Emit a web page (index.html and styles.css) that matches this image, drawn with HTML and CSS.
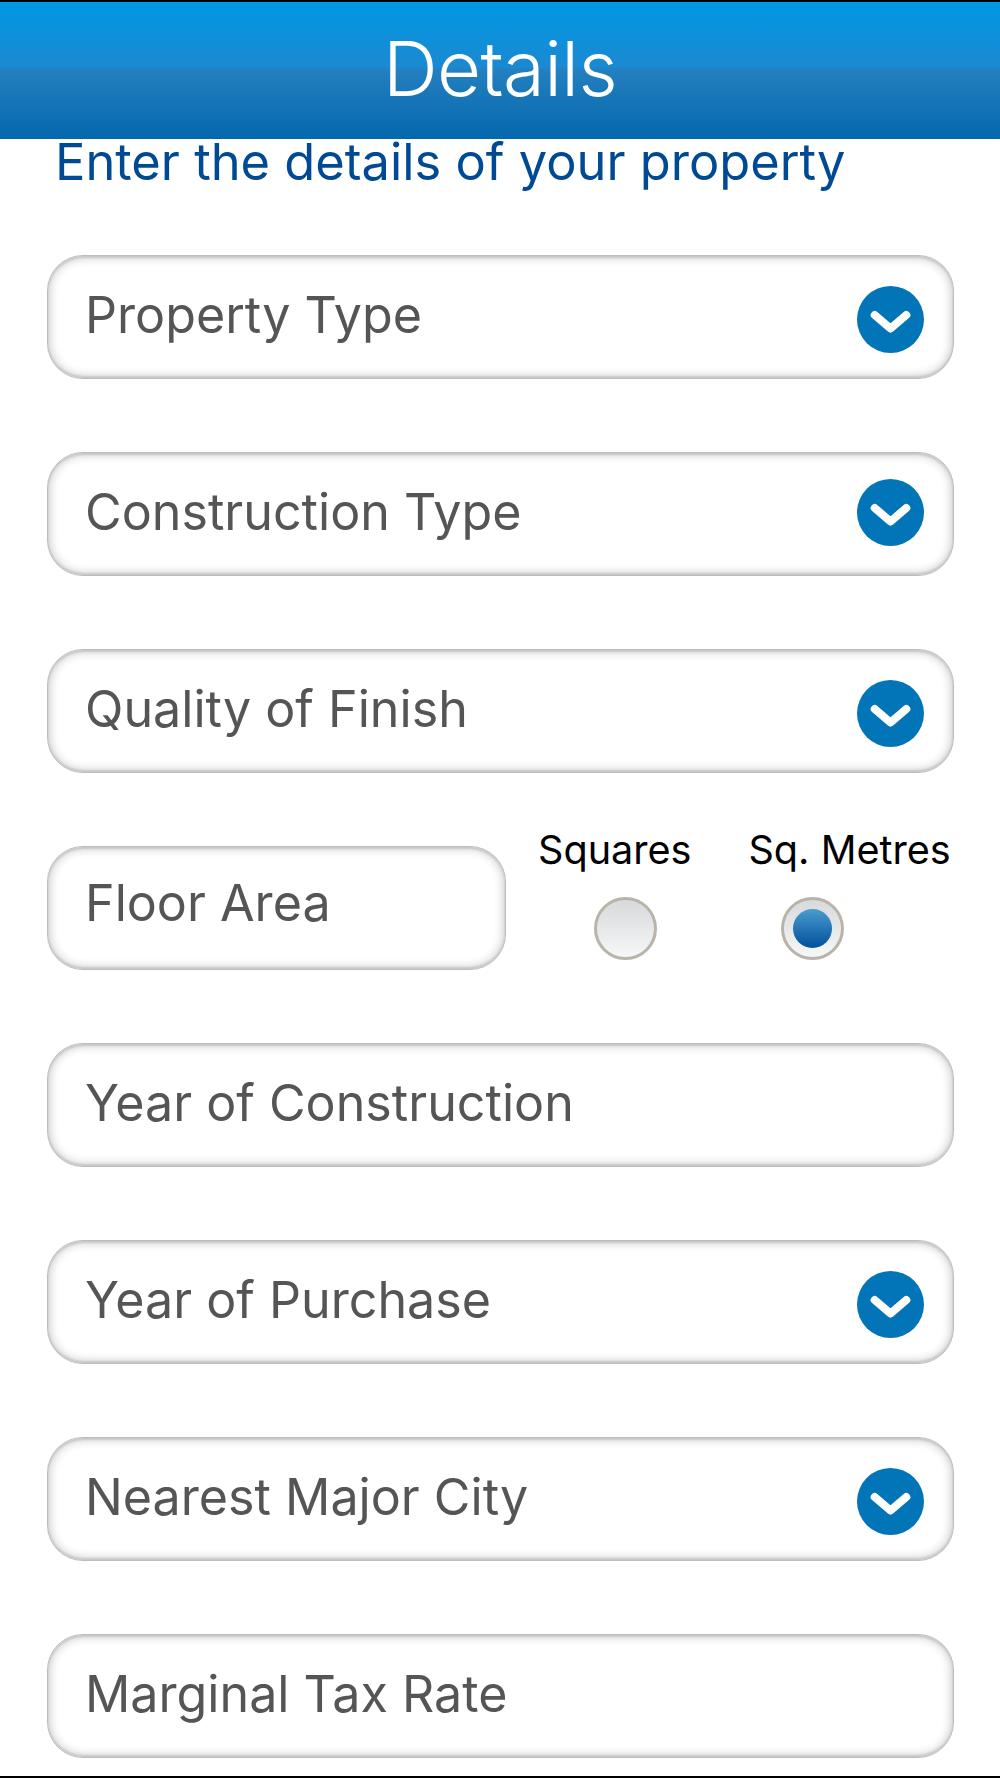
FILE: index.html
```html
<!DOCTYPE html>
<html lang="en">
<head>
<meta charset="utf-8">
<title>Details</title>
<link rel="stylesheet" href="styles.css">
</head>
<body>
<div class="screen">
  <header class="header"><h1 class="title">Details</h1></header>
  <p class="intro">Enter the details of your property</p>
  <form class="form">
    <div class="field"><span class="label">Property Type</span><svg class="chev" viewBox="0 0 67 67"><circle cx="33.5" cy="33.5" r="33.5" fill="#0274b8"/><path d="M17.7 29 33.5 42.5 49.3 29" fill="none" stroke="#fff" stroke-width="8" stroke-linecap="round" stroke-linejoin="round"/></svg></div>
    <div class="field"><span class="label">Construction Type</span><svg class="chev chev-high" viewBox="0 0 67 67"><circle cx="33.5" cy="33.5" r="33.5" fill="#0274b8"/><path d="M17.7 29 33.5 42.5 49.3 29" fill="none" stroke="#fff" stroke-width="8" stroke-linecap="round" stroke-linejoin="round"/></svg></div>
    <div class="field"><span class="label">Quality of Finish</span><svg class="chev" viewBox="0 0 67 67"><circle cx="33.5" cy="33.5" r="33.5" fill="#0274b8"/><path d="M17.7 29 33.5 42.5 49.3 29" fill="none" stroke="#fff" stroke-width="8" stroke-linecap="round" stroke-linejoin="round"/></svg></div>
    <div class="area-row">
      <div class="field field-short"><span class="label label-high">Floor Area</span></div>
      <div class="units">
        <div class="unit-labels"><span class="unit-label">Squares</span><span class="unit-label">Sq. Metres</span></div>
        <div class="unit-radios"><span class="radio"></span><span class="radio"><span class="dot"></span></span></div>
      </div>
    </div>
    <div class="field"><span class="label">Year of Construction</span></div>
    <div class="field"><span class="label">Year of Purchase</span><svg class="chev" viewBox="0 0 67 67"><circle cx="33.5" cy="33.5" r="33.5" fill="#0274b8"/><path d="M17.7 29 33.5 42.5 49.3 29" fill="none" stroke="#fff" stroke-width="8" stroke-linecap="round" stroke-linejoin="round"/></svg></div>
    <div class="field"><span class="label">Nearest Major City</span><svg class="chev" viewBox="0 0 67 67"><circle cx="33.5" cy="33.5" r="33.5" fill="#0274b8"/><path d="M17.7 29 33.5 42.5 49.3 29" fill="none" stroke="#fff" stroke-width="8" stroke-linecap="round" stroke-linejoin="round"/></svg></div>
    <div class="field"><span class="label">Marginal Tax Rate</span></div>
  </form>
</div>
</body>
</html>
```
FILE: styles.css
```css
* { box-sizing: border-box; }
html, body { margin: 0; padding: 0; }
body { font-family: Inter, "Liberation Sans", sans-serif; background: #fff; }
.screen {
  width: 1000px;
  height: 1778px;
  overflow: hidden;
  background: #fff;
  border-bottom: 2px solid #000;
  display: flex;
  flex-direction: column;
}
.header {
  height: 139px;
  flex: none;
  border-top: 2px solid #000;
  padding-bottom: 6px;
  background: linear-gradient(#0098e4 0%, #1b89d1 48%, #2480bf 49%, #0468ad 100%);
  display: flex;
  align-items: center;
  justify-content: center;
}
.title {
  margin: 0;
  color: #fff;
  font-size: 76px;
  font-weight: 350;
  letter-spacing: -0.6px;
  line-height: 1;
}
.intro {
  margin: 0 0 0 55px;
  height: 116px;
  flex: none;
  color: #004a94;
  font-size: 50.6px;
  line-height: 46px;
}
.form {
  display: flex;
  flex-direction: column;
  gap: 73px;
  padding: 0 46px 0 47px;
}
.field {
  height: 124px;
  flex: none;
  border-radius: 36px;
  background: #fff;
  border: 1px solid #bcbcbc;
  box-shadow: inset 0 2px 2px #c8c8c8, inset 0 -2px 2px #c8c8c8, inset 0 0 8px 3px #d6d6d6;
  padding: 0 29px 0 37px;
  display: flex;
  align-items: center;
  justify-content: space-between;
}
.label {
  color: #555;
  font-size: 50.2px;
  line-height: 1;
  padding-bottom: 4px;
}
.label-high { padding-bottom: 9px; }
.chev { width: 67px; height: 67px; flex: none; margin-top: 4px; }
.chev-high { margin-top: 0; margin-bottom: 3px; }
.area-row { display: flex; height: 124px; flex: none; }
.field-short { width: 459px; }
.units { flex: 1; margin-top: -19px; }
.unit-labels { display: flex; gap: 57px; padding-left: 32px; }
.unit-label { color: #000; font-size: 39.6px; line-height: 46px; white-space: nowrap; }
.unit-radios { display: flex; gap: 124px; padding: 24px 0 0 87.5px; }
.radio {
  width: 63px;
  height: 63px;
  flex: none;
  border-radius: 50%;
  border: 3px solid #b9b3a9;
  background: linear-gradient(#d7d9db, #f6f7f7);
  display: flex;
  align-items: center;
  justify-content: center;
}
.dot {
  width: 39px;
  height: 39px;
  border-radius: 50%;
  background: linear-gradient(#4a9ccf, #00509c);
}
```
